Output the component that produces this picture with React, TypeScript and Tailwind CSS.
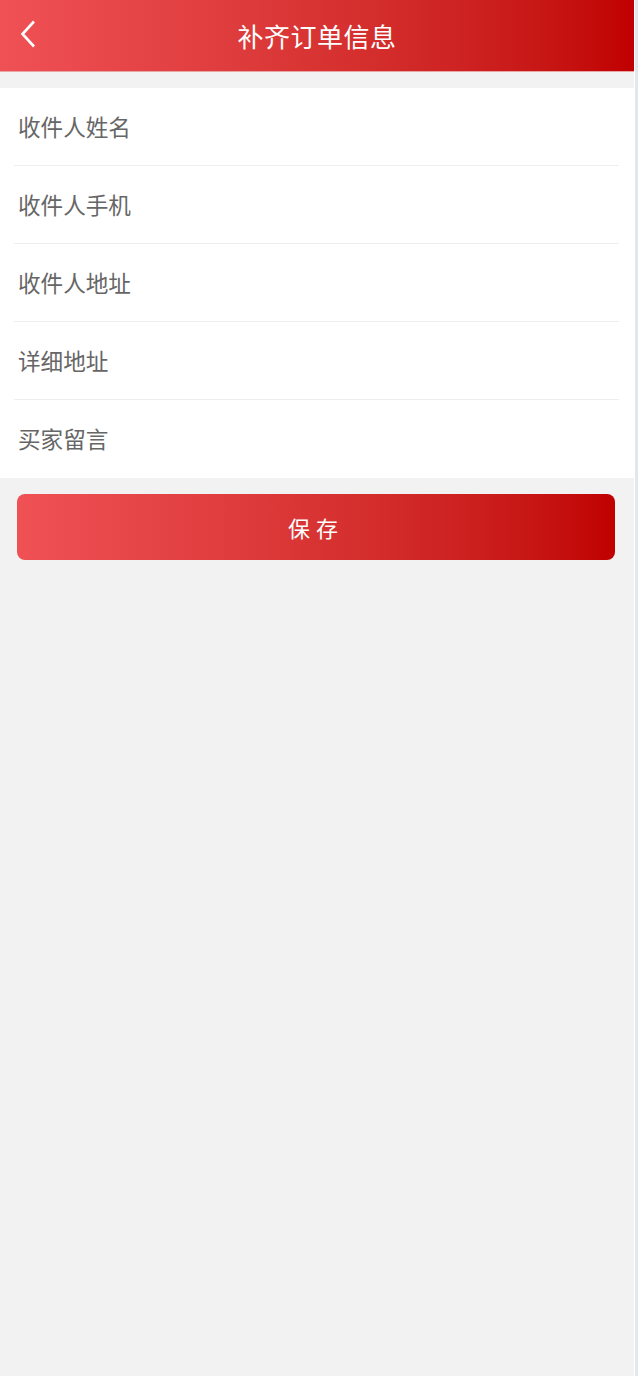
import React from 'react'

const FIELDS = ['收件人姓名', '收件人手机', '收件人地址', '详细地址', '买家留言']

const font = "font-['Microsoft_YaHei','Noto_Sans_CJK_SC','Noto_Sans',sans-serif]"

export default function App() {
  return (
    <div className={`flex min-h-[1376px] w-[638px] ${font}`}>
      <div className="flex w-[634px] flex-col bg-[#f2f2f2]">
        {/* Header */}
        <div className="relative flex h-[72px] items-center justify-center border-b border-[#e9a4a4] bg-gradient-to-r from-[#f05155] to-[#c00000]">
          <button className="absolute left-[18px] top-[19px] text-white">
            <svg width="20" height="30" viewBox="0 0 20 30" fill="none">
              <path d="M16 2.5 L4.5 15 L16 27.5" stroke="currentColor" strokeWidth="2.6" />
            </svg>
          </button>
          <h1 className="text-[26px] font-normal tracking-[0.5px] text-white">补齐订单信息</h1>
        </div>

        {/* Form list */}
        <div className="mt-4 bg-white">
          {FIELDS.map((f, i) => (
            <div key={f} className="pl-[14px] pr-[15px]">
              <div className={`flex h-[78px] items-center ${i < FIELDS.length - 1 ? 'border-b border-[#eeeeee]' : ''}`}>
                <input
                  placeholder={f}
                  className="w-full bg-transparent pl-1 text-[22.6px] text-[#666] placeholder:text-[#666] focus:outline-none"
                />
              </div>
            </div>
          ))}
        </div>

        {/* Save */}
        <div className="pl-[17px] pr-[19px] pt-4">
          <button className="flex h-[66px] w-full items-center justify-center rounded-lg bg-gradient-to-r from-[#f05155] to-[#c00000] text-[22px] tracking-[6px] text-white">
            保存
          </button>
        </div>
      </div>
      <div className="w-px bg-white" />
      <div className="w-[3px] bg-[#e3e6eb]" />
    </div>
  )
}
